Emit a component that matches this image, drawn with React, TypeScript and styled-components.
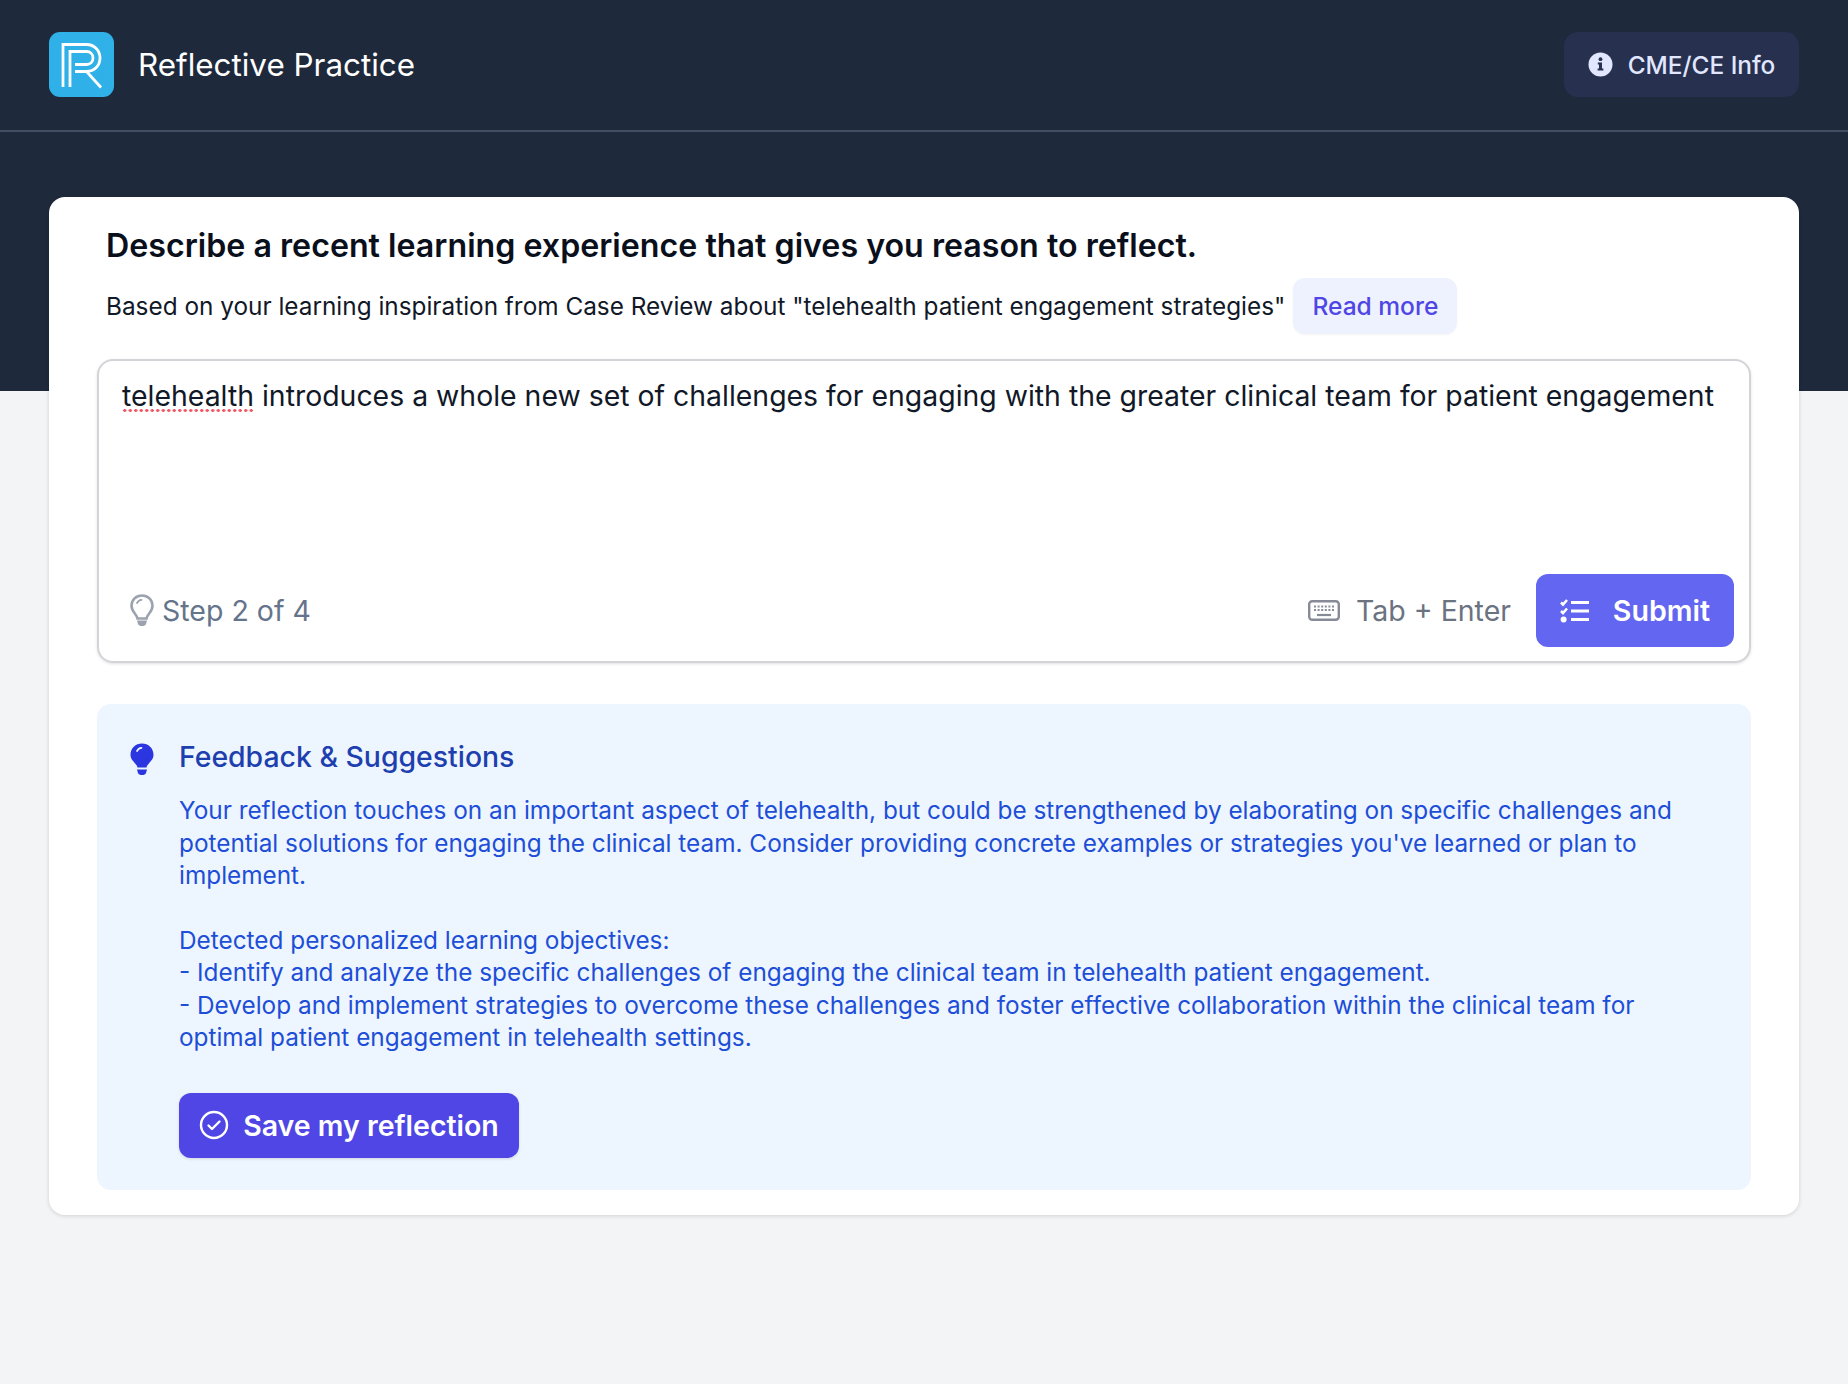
import styled, { createGlobalStyle } from "styled-components";

const GlobalStyle = createGlobalStyle`
  html, body { margin: 0; padding: 0; }
  body {
    background: #f3f4f6;
    font-family: Inter, "Noto Sans", "Liberation Sans", sans-serif;
    -webkit-font-smoothing: antialiased;
  }
  * { box-sizing: border-box; }
`;

const Page = styled.div`
  min-height: 1384px;
  display: flex;
  flex-direction: column;
`;

const Hero = styled.div`
  height: 391px;
  background: #1e293b;
`;

const TopBar = styled.header`
  height: 132px;
  padding: 32px 49px 0;
  display: flex;
  justify-content: space-between;
  align-items: flex-start;
  border-bottom: 2px solid #424c63;
`;

const Brand = styled.div`
  display: flex;
  align-items: center;
  gap: 24px;
`;

const Title = styled.h1`
  margin: 0;
  font-size: 31.4px;
  font-weight: 400;
  color: #fff;
`;

const InfoButton = styled.button`
  height: 65px;
  width: 235px;
  border: 0;
  border-radius: 14px;
  background: #27304f;
  color: #e0e7ff;
  font: 500 24.4px Inter, sans-serif;
  display: flex;
  align-items: center;
  justify-content: center;
  gap: 15px;
`;

const Card = styled.main`
  margin: -194px 49px 0;
  height: 1018px;
  padding: 0 48px;
  background: #fff;
  border-radius: 16px;
  box-shadow: 0 1px 4px rgba(0, 0, 0, 0.14);
`;

const Heading = styled.h2`
  margin: 0;
  padding: 29px 0 0 9px;
  height: 82px;
  font-size: 32.2px;
  line-height: 40px;
  font-weight: 600;
  color: #0a0f1c;
`;

const SubRow = styled.div`
  padding-left: 9px;
  height: 80px;
  display: flex;
  align-items: flex-start;
  gap: 8px;
  font-size: 24.35px;
  color: #111827;
`;

const SubText = styled.span`
  line-height: 55px;
`;

const ReadMore = styled.button`
  height: 56px;
  width: 164px;
  margin-top: -1px;
  border: 0;
  border-radius: 12px;
  background: #eef2ff;
  color: #4f46e5;
  font: 500 24.55px Inter, sans-serif;
  box-shadow: 0 1px 2px rgba(0, 0, 0, 0.05);
`;

const Composer = styled.section`
  height: 304px;
  border: 2px solid #d4d4d8;
  border-radius: 16px;
  display: flex;
  flex-direction: column;
  justify-content: space-between;
  padding: 15px 15px 14px 23px;
  box-shadow: 0 1px 3px rgba(0, 0, 0, 0.12);
`;

const Entry = styled.div`
  font-size: 28.42px;
  line-height: 40px;
  color: #111827;
  white-space: nowrap;
`;

const Misspelt = styled.span`
  position: relative;

  &::after {
    content: "";
    position: absolute;
    left: 0;
    right: 0;
    bottom: 1px;
    height: 3px;
    background: radial-gradient(circle at center, #ef5b68 1.4px, transparent 1.8px) 0 0 / 5.5px 3px repeat-x;
  }
`;

const ComposerFooter = styled.div`
  display: flex;
  align-items: center;
  justify-content: space-between;
  margin-left: -1px;
`;

const Hint = styled.div<{ $gap: number }>`
  display: flex;
  align-items: center;
  gap: ${({ $gap }) => $gap}px;
  font-size: 28.5px;
  color: #6b7280;
`;

const StepHint = styled(Hint)`
  padding-left: 9px;
  color: #64748b;
`;

const Actions = styled.div`
  display: flex;
  align-items: center;
  gap: 25px;
`;

const SubmitButton = styled.button`
  height: 73px;
  width: 198px;
  border: 0;
  border-radius: 12px;
  background: #6366f1;
  color: #fff;
  font: 600 28.6px Inter, sans-serif;
  display: flex;
  align-items: center;
  justify-content: center;
  gap: 24px;
`;

const Feedback = styled.section`
  margin-top: 41px;
  height: 486px;
  padding: 32px 32px 0 32px;
  background: #edf5fe;
  border-radius: 14px;
  display: flex;
  gap: 20px;
`;

const FeedbackIcon = styled.div`
  width: 30px;
  flex: none;
  padding: 7px 0 0 1px;
`;

const FeedbackBody = styled.div`
  flex: 1;
`;

const FeedbackTitle = styled.h3`
  margin: 1px 0 17px;
  font-size: 28.4px;
  line-height: 40px;
  font-weight: 500;
  color: #1e40af;
`;

const FeedbackText = styled.p`
  margin: 0 0 32px;
  font-size: 24.35px;
  line-height: 32.5px;
  color: #1d4ed8;
`;

const SaveButton = styled.button`
  margin-top: 39px;
  height: 65px;
  width: 340px;
  border: 0;
  border-radius: 12px;
  background: #4f46e5;
  color: #fff;
  font: 600 28.5px Inter, sans-serif;
  display: flex;
  align-items: center;
  justify-content: center;
  gap: 14px;
  box-shadow: 0 1px 3px rgba(0, 0, 0, 0.12);
`;

function Logo() {
  return (
    <svg width="65" height="65" viewBox="0 0 65 65" fill="none">
      <defs>
        <linearGradient id="logoFill" x1="0" y1="65" x2="65" y2="0">
          <stop offset="0" stopColor="#1f92f0" />
          <stop offset="1" stopColor="#40cfe0" />
        </linearGradient>
      </defs>
      <rect width="65" height="65" rx="11" fill="url(#logoFill)" />
      <g stroke="#fff" strokeWidth="2.8" fill="none">
        <path d="M14 55V12.5H37.5C45.5 12.5 51 18.5 51 26C51 33.5 45.5 39.5 37.5 39.5H26" />
        <path d="M21 55V19.5H37.5C41.5 19.5 44 22.5 44 26C44 29.5 41.5 32.5 37.5 32.5H26" />
        <path d="M37.5 39.5L52 55.5" />
      </g>
    </svg>
  );
}

function InfoIcon() {
  return (
    <svg width="25" height="25" viewBox="0 0 25 25">
      <circle cx="12.5" cy="12.5" r="12" fill="#e0e7ff" />
      <circle cx="12.5" cy="7.2" r="1.9" fill="#27304f" />
      <path d="M9.8 10.6H14V16.6H15.4V18.6H9.6V16.6H11V12.6H9.8Z" fill="#27304f" />
    </svg>
  );
}

function BulbOutline() {
  return (
    <svg width="24" height="33" viewBox="0 0 24 33" fill="none">
      <path
        d="M7.5 24.5C7 20.5 1.5 18 1.5 11.8C1.5 5.8 6.2 1.5 12 1.5C17.8 1.5 22.5 5.8 22.5 11.8C22.5 18 17 20.5 16.5 24.5Z"
        stroke="#9ca3af"
        strokeWidth="2.6"
      />
      <path d="M7 9C8 7.2 9.5 6 11.5 5.8" stroke="#9ca3af" strokeWidth="1.8" strokeLinecap="round" />
      <path d="M7 26.5H17L16 30C15.5 31.5 14 32 12 32C10 32 8.5 31.5 8 30Z" fill="#9ca3af" />
    </svg>
  );
}

function BulbSolid() {
  return (
    <svg width="24" height="33" viewBox="0 0 24 33" fill="none">
      <path
        d="M7.5 24.5C7 20.5 0.5 18 0.5 11.8C0.5 5.3 5.6 0.5 12 0.5C18.4 0.5 23.5 5.3 23.5 11.8C23.5 18 17 20.5 16.5 24.5Z"
        fill="#2b35e0"
      />
      <path d="M7 8C8 6 9.6 5 11.5 4.8" stroke="#eff6ff" strokeWidth="1.7" strokeLinecap="round" />
      <path d="M7 26.5H17L16 30C15.5 31.5 14 32 12 32C10 32 8.5 31.5 8 30Z" fill="#2b35e0" />
    </svg>
  );
}

function KeyboardIcon() {
  return (
    <svg width="32" height="21" viewBox="0 0 32 21" fill="none">
      <rect x="1.2" y="1.2" width="29.6" height="18.6" rx="3" stroke="#868b97" strokeWidth="2.4" />
      <path
        d="M6 6.5H26M6 10H26"
        stroke="#868b97"
        strokeWidth="2"
        strokeDasharray="2 1.6"
      />
      <path d="M9 15H23" stroke="#868b97" strokeWidth="2.2" />
    </svg>
  );
}

function ChecklistIcon() {
  return (
    <svg width="29" height="24" viewBox="0 0 29 24" fill="none" stroke="#fff" strokeWidth="2.6">
      <path d="M1 3.5L3 5.5L7 1" />
      <path d="M1 12L3 14L7 9.5" />
      <circle cx="3.6" cy="20.5" r="3" fill="#fff" stroke="none" />
      <path d="M11 3.5H29M11 12H29M11 20.5H29" strokeWidth="3" />
    </svg>
  );
}

function CheckCircleIcon() {
  return (
    <svg width="30" height="30" viewBox="0 0 30 30" fill="none" stroke="#fff" strokeWidth="2.4">
      <circle cx="15" cy="15" r="13" />
      <path d="M9.5 15.5L13 19L20.5 11.5" strokeLinecap="round" strokeLinejoin="round" />
    </svg>
  );
}

export default function App() {
  return (
    <Page>
      <GlobalStyle />
      <Hero>
        <TopBar>
          <Brand>
            <Logo />
            <Title>Reflective Practice</Title>
          </Brand>
          <InfoButton>
            <InfoIcon />
            CME/CE Info
          </InfoButton>
        </TopBar>
      </Hero>
      <Card>
        <Heading>Describe a recent learning experience that gives you reason to reflect.</Heading>
        <SubRow>
          <SubText>
            Based on your learning inspiration from Case Review about "telehealth patient engagement strategies"
          </SubText>
          <ReadMore>Read more</ReadMore>
        </SubRow>
        <Composer>
          <Entry>
            <Misspelt>telehealth</Misspelt> introduces a whole new set of challenges for engaging with the greater clinical team for patient engagement
          </Entry>
          <ComposerFooter>
            <StepHint $gap={8}>
              <BulbOutline />
              Step 2 of 4
            </StepHint>
            <Actions>
              <Hint $gap={16}>
                <KeyboardIcon />
                Tab + Enter
              </Hint>
              <SubmitButton>
                <ChecklistIcon />
                Submit
              </SubmitButton>
            </Actions>
          </ComposerFooter>
        </Composer>
        <Feedback>
          <FeedbackIcon>
            <BulbSolid />
          </FeedbackIcon>
          <FeedbackBody>
            <FeedbackTitle>Feedback &amp; Suggestions</FeedbackTitle>
            <FeedbackText>
              Your reflection touches on an important aspect of telehealth, but could be strengthened by elaborating on specific challenges and potential solutions for engaging the clinical team. Consider providing concrete examples or strategies you've learned or plan to implement.
            </FeedbackText>
            <FeedbackText>
              Detected personalized learning objectives:
              <br />- Identify and analyze the specific challenges of engaging the clinical team in telehealth patient engagement.
              <br />- Develop and implement strategies to overcome these challenges and foster effective collaboration within the clinical team for optimal patient engagement in telehealth settings.
            </FeedbackText>
            <SaveButton>
              <CheckCircleIcon />
              Save my reflection
            </SaveButton>
          </FeedbackBody>
        </Feedback>
      </Card>
    </Page>
  );
}
